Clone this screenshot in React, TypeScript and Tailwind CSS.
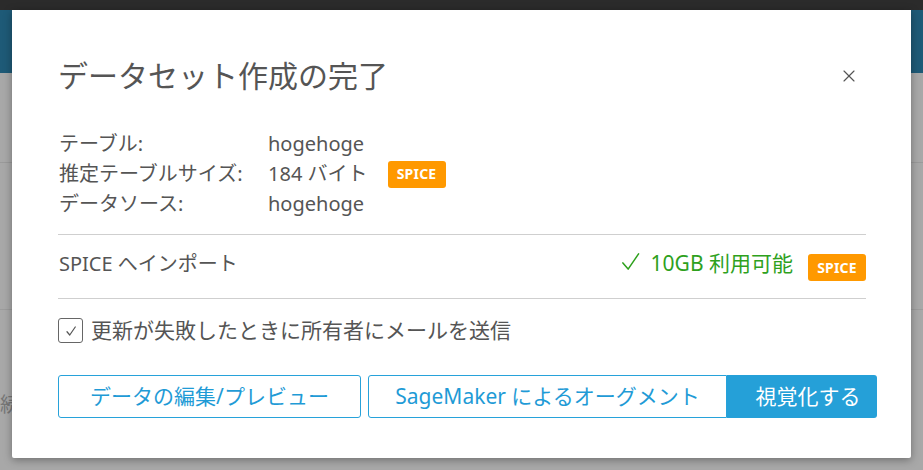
import { X } from 'lucide-react';

const font = { fontFamily: '"Noto Sans", "Noto Sans CJK JP", sans-serif' };

function Badge() {
  return (
    <span className="inline-flex h-[27px] w-[58px] items-center justify-center rounded-[3px] bg-[#ff9900] text-[14px] font-bold tracking-[0.2px] text-white">
      SPICE
    </span>
  );
}

// thin tick with a long right stroke, as in the screenshot
function Tick({ className, width = 1.6 }: { className?: string; width?: number }) {
  return (
    <svg viewBox="0 0 20 20" className={className} fill="none" stroke="currentColor" strokeWidth={width} strokeLinecap="round" strokeLinejoin="round">
      <path d="M2 11.5 7.5 18 18.5 2" />
    </svg>
  );
}

export default function App() {
  return (
    <div className="relative h-[470px] w-[923px] overflow-hidden bg-[#a8a8a8]" style={font}>
      {/* page behind the dimmed overlay */}
      <div className="h-[10px] bg-[#2b2b2b]" />
      <div className="h-[63px] bg-[#1e5a77]" />
      <div className="h-[90px] border-b border-[#9a9a9a]" />
      <div className="h-[147px] border-b border-[#9c9c9c]" />
      <div className="flex h-[190px] items-center text-[20px] text-[#777]">続</div>
      <div className="flex gap-[35px]">
        <div className="h-[60px] w-[250px] bg-[#a4a4a4]" />
        <div className="h-[60px] w-[495px] bg-[#a4a4a4]" />
        <div className="h-[60px] flex-1 bg-[#a4a4a4]" />
      </div>

      {/* modal */}
      <div className="absolute left-[12px] top-[10px] flex h-[448px] w-[899px] flex-col rounded-b-[2px] bg-white pl-[46px] pr-[45px] shadow-[0_2px_8px_rgba(0,0,0,0.35)]">
        <div className="mt-[46px] flex h-[40px] items-center justify-between">
          <h2 className="text-[30px] leading-[40px] text-[#555]">データセット作成の完了</h2>
          <X className="mr-[7px] h-[20px] w-[20px] text-[#555]" strokeWidth={1.4} />
        </div>

        <div className="mt-[33px] grid grid-cols-[210px_auto_1fr] text-[20px] leading-[30px] text-[#555]">
          <span className="pl-px">テーブル:</span>
          <span>hogehoge</span>
          <span />
          <span className="pl-px">推定テーブルサイズ:</span>
          <span>184 バイト</span>
          <span className="flex items-center pl-[20px]">
            <Badge />
          </span>
          <span className="pl-px">データソース:</span>
          <span>hogehoge</span>
          <span />
        </div>

        <div className="mt-[15px] border-t border-[#cfcfcf]" />
        <div className="flex h-[63px] items-center justify-between">
          <span className="pb-[5px] pl-px text-[20px] text-[#555]">SPICE へインポート</span>
          <div className="flex items-center">
            <span className="flex items-center pb-[5px] text-[21px] text-[#2ea11d]">
              <Tick className="mb-[5px] mr-[11px] h-[19px] w-[19px]" width={1.6} />
              10GB 利用可能
            </span>
            <span className="ml-[15px] pt-[2px]">
              <Badge />
            </span>
          </div>
        </div>
        <div className="border-t border-[#cfcfcf]" />

        <div className="mt-[19px] flex items-center gap-[8px]">
          <span className="flex h-[25px] w-[25px] items-center justify-center rounded-[3px] border-[1.5px] border-[#666] text-[#555]">
            <Tick className="h-[10px] w-[10px]" width={2.4} />
          </span>
          <span className="text-[21px] leading-[25px] text-[#555]">更新が失敗したときに所有者にメールを送信</span>
        </div>

        <div className="mt-[32px] flex h-[43px] text-[21px]">
          <button className="w-[303px] shrink-0 rounded-[3px] border border-[#27a2da] text-[#1f9bd6]">データの編集/プレビュー</button>
          <button className="ml-[7px] w-[359px] shrink-0 rounded-l-[3px] border border-[#27a2da] text-[#1f9bd6]">SageMaker によるオーグメント</button>
          <button className="w-[150px] shrink-0 rounded-r-[3px] bg-[#25a0d8] pl-[12px] text-white">視覚化する</button>
        </div>
      </div>
    </div>
  );
}
